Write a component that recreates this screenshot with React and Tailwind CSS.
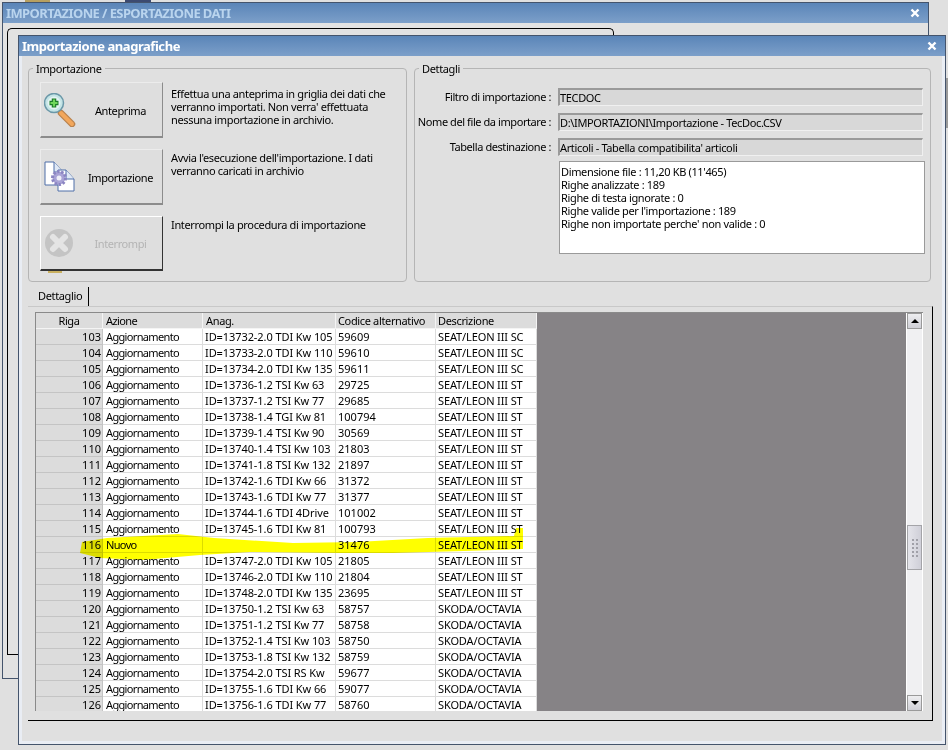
const rows = [
  [103, 'Aggiornamento', 'ID=13732-2.0 TDI Kw 105', '59609', 'SEAT/LEON III SC'],
  [104, 'Aggiornamento', 'ID=13733-2.0 TDI Kw 110', '59610', 'SEAT/LEON III SC'],
  [105, 'Aggiornamento', 'ID=13734-2.0 TDI Kw 135', '59611', 'SEAT/LEON III SC'],
  [106, 'Aggiornamento', 'ID=13736-1.2 TSI Kw 63', '29725', 'SEAT/LEON III ST'],
  [107, 'Aggiornamento', 'ID=13737-1.2 TSI Kw 77', '29685', 'SEAT/LEON III ST'],
  [108, 'Aggiornamento', 'ID=13738-1.4 TGI Kw 81', '100794', 'SEAT/LEON III ST'],
  [109, 'Aggiornamento', 'ID=13739-1.4 TSI Kw 90', '30569', 'SEAT/LEON III ST'],
  [110, 'Aggiornamento', 'ID=13740-1.4 TSI Kw 103', '21803', 'SEAT/LEON III ST'],
  [111, 'Aggiornamento', 'ID=13741-1.8 TSI Kw 132', '21897', 'SEAT/LEON III ST'],
  [112, 'Aggiornamento', 'ID=13742-1.6 TDI Kw 66', '31372', 'SEAT/LEON III ST'],
  [113, 'Aggiornamento', 'ID=13743-1.6 TDI Kw 77', '31377', 'SEAT/LEON III ST'],
  [114, 'Aggiornamento', 'ID=13744-1.6 TDI 4Drive', '101002', 'SEAT/LEON III ST'],
  [115, 'Aggiornamento', 'ID=13745-1.6 TDI Kw 81', '100793', 'SEAT/LEON III ST'],
  [116, 'Nuovo', '', '31476', 'SEAT/LEON III ST'],
  [117, 'Aggiornamento', 'ID=13747-2.0 TDI Kw 105', '21805', 'SEAT/LEON III ST'],
  [118, 'Aggiornamento', 'ID=13746-2.0 TDI Kw 110', '21804', 'SEAT/LEON III ST'],
  [119, 'Aggiornamento', 'ID=13748-2.0 TDI Kw 135', '23695', 'SEAT/LEON III ST'],
  [120, 'Aggiornamento', 'ID=13750-1.2 TSI Kw 63', '58757', 'SKODA/OCTAVIA'],
  [121, 'Aggiornamento', 'ID=13751-1.2 TSI Kw 77', '58758', 'SKODA/OCTAVIA'],
  [122, 'Aggiornamento', 'ID=13752-1.4 TSI Kw 103', '58750', 'SKODA/OCTAVIA'],
  [123, 'Aggiornamento', 'ID=13753-1.8 TSI Kw 132', '58759', 'SKODA/OCTAVIA'],
  [124, 'Aggiornamento', 'ID=13754-2.0 TSI RS Kw', '59677', 'SKODA/OCTAVIA'],
  [125, 'Aggiornamento', 'ID=13755-1.6 TDI Kw 66', '59077', 'SKODA/OCTAVIA'],
  [126, 'Aggiornamento', 'ID=13756-1.6 TDI Kw 77', '58760', 'SKODA/OCTAVIA'],
];

const memo = [
  "Dimensione file : 11,20 KB (11'465)",
  'Righe analizzate : 189',
  'Righe di testa ignorate : 0',
  "Righe valide per l'importazione : 189",
  "Righe non importate perche' non valide : 0",
];

const fields = [
  ['Filtro di importazione :', 'TECDOC'],
  ['Nome del file da importare :', 'D:\\IMPORTAZIONI\\Importazione - TecDoc.CSV'],
  ['Tabella destinazione :', "Articoli - Tabella compatibilita' articoli"],
];

function CloseIcon() {
  return (
    <svg width="10" height="10" viewBox="0 0 10 10">
      <path d="M1.5 1.5 L8.5 8.5 M8.5 1.5 L1.5 8.5" stroke="#fff" strokeWidth="2.4" />
    </svg>
  );
}

function MagnifierIcon() {
  return (
    <svg width="32" height="34" viewBox="0 0 32 34">
      <path d="M17 20 L28 31" stroke="#b9824e" strokeWidth="6.5" strokeLinecap="round" />
      <path d="M17 20 L28 31" stroke="#f2a75c" strokeWidth="4" strokeLinecap="round" />
      <circle cx="10" cy="10" r="9.5" fill="#c4e4e6" stroke="#6b98a8" strokeWidth="1.5" />
      <circle cx="10" cy="10" r="6.5" fill="#e4f4f2" />
      <path d="M10 5.5 V14.5 M5.5 10 H14.5" stroke="#1c7a2a" strokeWidth="4.5" />
      <path d="M10 6.5 V13.5 M6.5 10 H13.5" stroke="#6fd65a" strokeWidth="2.2" />
    </svg>
  );
}

function DocGearIcon() {
  return (
    <svg width="32" height="32" viewBox="0 0 32 32">
      <path d="M1 1 H10 L19 11 V24 H1 Z" fill="#fff" stroke="#4f6fa8" />
      <path d="M10 1 V11 H19" fill="#dfe8f5" stroke="#4f6fa8" />
      <path d="M14 9 H22 L30 18 V30 H14 Z" fill="#fff" stroke="#4f6fa8" />
      <path d="M22 9 V18 H30" fill="#dfe8f5" stroke="#4f6fa8" />
      <circle cx="15" cy="17" r="6.5" fill="#a9a3d6" stroke="#8b85c2" strokeWidth="3" strokeDasharray="2.4 1.6" />
      <circle cx="15" cy="17" r="2.5" fill="#eeeef8" />
    </svg>
  );
}

function StopIcon() {
  return (
    <svg width="30" height="30" viewBox="0 0 30 30">
      <circle cx="15" cy="15" r="14" fill="#c4c4c4" />
      <path d="M9 9 L21 21 M21 9 L9 21" stroke="#e4e4e4" strokeWidth="6" strokeLinecap="round" />
    </svg>
  );
}

function ActionButton({ icon, label, disabled }) {
  return (
    <button
      className={`flex items-center w-[123px] shrink-0 pl-[3px] border bg-[#dedede] ${
        disabled
          ? 'h-[55px] text-[#b4b4b4] border-t-white border-l-white border-r-[#333] border-b-[#333] border-b-2'
          : 'h-[56px] text-black border-t-[#ececec] border-l-[#ececec] border-r-[#8c8c8c] border-b-[#8c8c8c] border-b-2'
      }`}
    >
      <span className="flex w-[32px] shrink-0">{icon}</span>
      <span className="flex-1 pl-[3px] pt-[3px] text-center tracking-[-0.4px]">{label}</span>
    </button>
  );
}

function GroupBox({ title, className, children }) {
  return (
    <div className={`relative h-[214px] border border-[#b5b5b5] rounded-[4px] ${className}`}>
      <span className="absolute left-[4px] top-[-7px] bg-[#e0e0e0] px-[3px] leading-[13px]">{title}</span>
      {children}
    </div>
  );
}

const headCell = 'bg-[#dcdcdc] border-r border-b border-[#f4f4f4] leading-[15px] whitespace-nowrap';
const bodyCell = 'border-r border-b border-[#dcdcdc] leading-[15px] whitespace-nowrap overflow-hidden';

export default function App() {
  return (
    <div
      className="relative w-[948px] h-[750px] overflow-hidden bg-[#e0e0e0] text-[11px] text-black tracking-[-0.35px]"
      style={{ fontFamily: '"Noto Sans", sans-serif' }}
    >
      {/* bits of whatever is behind the windows */}
      <div className="absolute left-[25px] top-0 w-[25px] h-[2px] bg-[#b8a060]" />
      <div className="absolute left-[125px] top-0 w-[26px] h-[2px] bg-[#3c4a70]" />
      <div className="absolute left-[946px] top-[78px] w-[2px] h-[50px] bg-[#9a9a9a]" />

      {/* finestra dietro */}
      <div className="absolute left-[2px] top-[2px] w-[927px] h-[677px] border border-[#44546c] bg-[#e2e2e2]">
        <div className="flex items-center justify-between h-[20px] pl-[3px] pr-[8px] bg-gradient-to-b from-[#5a85b8] to-[#7c9fc9]">
          <span className="text-[13px] font-bold text-[#b9d4ee] leading-none tracking-[-0.6px]">IMPORTAZIONE / ESPORTAZIONE DATI</span>
          <CloseIcon />
        </div>
        <div className="flex pl-[4px] pt-[5px]">
          <div className="w-[303px] h-[627px] border-t border-l border-b border-black rounded-tl-[5px]" />
          <div className="w-[304px] h-[20px] border-t border-r border-black rounded-tr-[5px]" />
        </div>
      </div>

      {/* finestra principale */}
      <div className="absolute left-[18px] top-[35px] w-[928px] h-[710px] flex flex-col border border-[#44546c] bg-[#e0e0e0]">
        <div className="flex items-center justify-between h-[20px] shrink-0 pl-[3px] pr-[8px] bg-gradient-to-b from-[#5a85b8] to-[#7c9fc9]">
          <span className="text-[13px] font-bold text-white leading-none tracking-[-0.45px]">Importazione anagrafiche</span>
          <CloseIcon />
        </div>

        <div className="flex flex-col flex-1 pl-[6px] pt-[12px] border-x-[3px] border-b-[3px] border-[#e9edf4]">
          <div className="flex gap-[7px]">
            <GroupBox title="Importazione" className="w-[379px] pl-[11px] pt-[13px]">
              <div className="flex flex-col gap-[11px]">
                <div className="flex gap-[8px]">
                  <ActionButton icon={<MagnifierIcon />} label="Anteprima" />
                  <p className="pt-[5px] leading-[13px] whitespace-nowrap">
                    Effettua una anteprima in griglia dei dati che
                    <br />
                    verranno importati. Non verra' effettuata
                    <br />
                    nessuna importazione in archivio.
                  </p>
                </div>
                <div className="flex gap-[8px]">
                  <ActionButton icon={<DocGearIcon />} label="Importazione" />
                  <p className="pt-[2px] leading-[13px] whitespace-nowrap">
                    Avvia l'esecuzione dell'importazione. I dati
                    <br />
                    verranno caricati in archivio
                  </p>
                </div>
                <div className="relative flex gap-[8px]">
                  <ActionButton icon={<StopIcon />} label="Interrompi" disabled />
                  <p className="pt-[2px] leading-[13px] whitespace-nowrap">Interrompi la procedura di importazione</p>
                  <div className="absolute left-[8px] top-[55px] w-[14px] h-[2px] bg-[#c9b060]" />
                </div>
              </div>
            </GroupBox>

            <GroupBox title="Dettagli" className="w-[517px] pt-[19px]">
              <div className="flex flex-col gap-[7px]">
                {fields.map(([label, value]) => (
                  <div key={label} className="flex items-center gap-[7px]">
                    <span className="w-[136px] text-right whitespace-nowrap tracking-[-0.42px]">{label}</span>
                    <span className="w-[365px] h-[18px] leading-[15px] bg-[#d8d8d8] border-t-2 border-l-2 border-t-[#9a9a9a] border-l-[#9a9a9a] border-r border-b border-r-[#f0f0f0] border-b-[#f0f0f0]">
                      {value}
                    </span>
                  </div>
                ))}
              </div>
              <div className="ml-[144px] mt-[5px] w-[366px] h-[93px] bg-white border border-[#9a9a9a] pl-[1px] pt-[3px] leading-[13px]">
                {memo.map((line) => (
                  <div key={line}>{line}</div>
                ))}
              </div>
            </GroupBox>
          </div>

          <div className="flex h-[21px] mt-[3px] ml-[2px]">
            <div className="flex items-center w-[59px] h-[19px] mt-[2px] pl-[8px] border-r border-black">Dettaglio</div>
          </div>

          {/* griglia */}
          <div className="w-[905px] h-[415px] border-t border-[#c8c8c8] border-b border-b-black border-r border-r-black pl-[7px] pr-[9px] pt-[5px]">
            <div className="flex h-[399px] border-l border-t border-[#8a8a8a]">
              <div className="relative w-[501px] overflow-hidden">
                <div className="grid grid-cols-[67px_100px_133px_100px_101px] h-[16px]">
                  <div className={`text-center ${headCell}`}>Riga</div>
                  <div className={`pl-[3px] tracking-[-0.6px] ${headCell}`}>Azione</div>
                  <div className={`pl-[3px] ${headCell}`}>Anag.</div>
                  <div className={`pl-[2px] ${headCell}`}>Codice alternativo</div>
                  <div className={`pl-[2px] ${headCell}`}>Descrizione</div>
                </div>
                {rows.map((r) => (
                  <div key={r[0]} className="grid grid-cols-[67px_100px_133px_100px_101px] h-[16px] bg-white">
                    <div className="text-right pr-[1px] bg-[#dcdcdc] border-r border-b border-[#c4c4c4] leading-[15px] tracking-normal">{r[0]}</div>
                    <div className={`pl-[3px] tracking-[-0.65px] ${bodyCell}`}>{r[1]}</div>
                    <div className={`pl-[2px] tracking-[-0.08px] ${bodyCell}`}>{r[2]}</div>
                    <div className={`pl-[2px] tracking-normal ${bodyCell}`}>{r[3]}</div>
                    <div className={`pl-[2px] tracking-[-0.12px] ${bodyCell}`}>{r[4]}</div>
                  </div>
                ))}
                <svg className="absolute left-[44px] top-[213px] mix-blend-multiply" width="446" height="36" viewBox="80 526 446 36">
                  <path
                    d="M80 553 L82 542 L107 538 L178 534 L214 538 L293 543 L357 542 L428 538 L514 536 L516 528 L523 528 L523 549 L464 551 L393 553 L339 553 L250 552 L200 555 L143 560 L100 558 Z"
                    fill="#ffff00"
                  />
                </svg>
              </div>
              <div className="flex-1 bg-[#868386]" />
              <div className="relative flex flex-col justify-between w-[17px] bg-[#f0f0f2] border-l border-r border-white">
                <div className="flex items-center justify-center h-[16px] bg-gradient-to-b from-[#eeeef0] to-[#cfcfd6] border border-[#9a9a9a]">
                  <span className="w-0 h-0 border-l-[4px] border-r-[4px] border-b-[4px] border-l-transparent border-r-transparent border-b-black" />
                </div>
                <div className="absolute left-0 top-[212px] flex items-center justify-center w-[15px] h-[45px] bg-gradient-to-r from-[#e4e4ea] to-[#cfcfd8] border border-[#a4a4a8]">
                  <div className="grid grid-cols-2 gap-[2px]">
                    {[...Array(10)].map((_, i) => (
                      <span key={i} className="w-[2px] h-[2px] bg-[#a0a0a8]" />
                    ))}
                  </div>
                </div>
                <div className="flex items-center justify-center h-[16px] bg-gradient-to-b from-[#eeeef0] to-[#cfcfd6] border border-[#9a9a9a]">
                  <span className="w-0 h-0 border-l-[4px] border-r-[4px] border-t-[4px] border-l-transparent border-r-transparent border-t-black" />
                </div>
              </div>
            </div>
          </div>
        </div>
      </div>
    </div>
  );
}
